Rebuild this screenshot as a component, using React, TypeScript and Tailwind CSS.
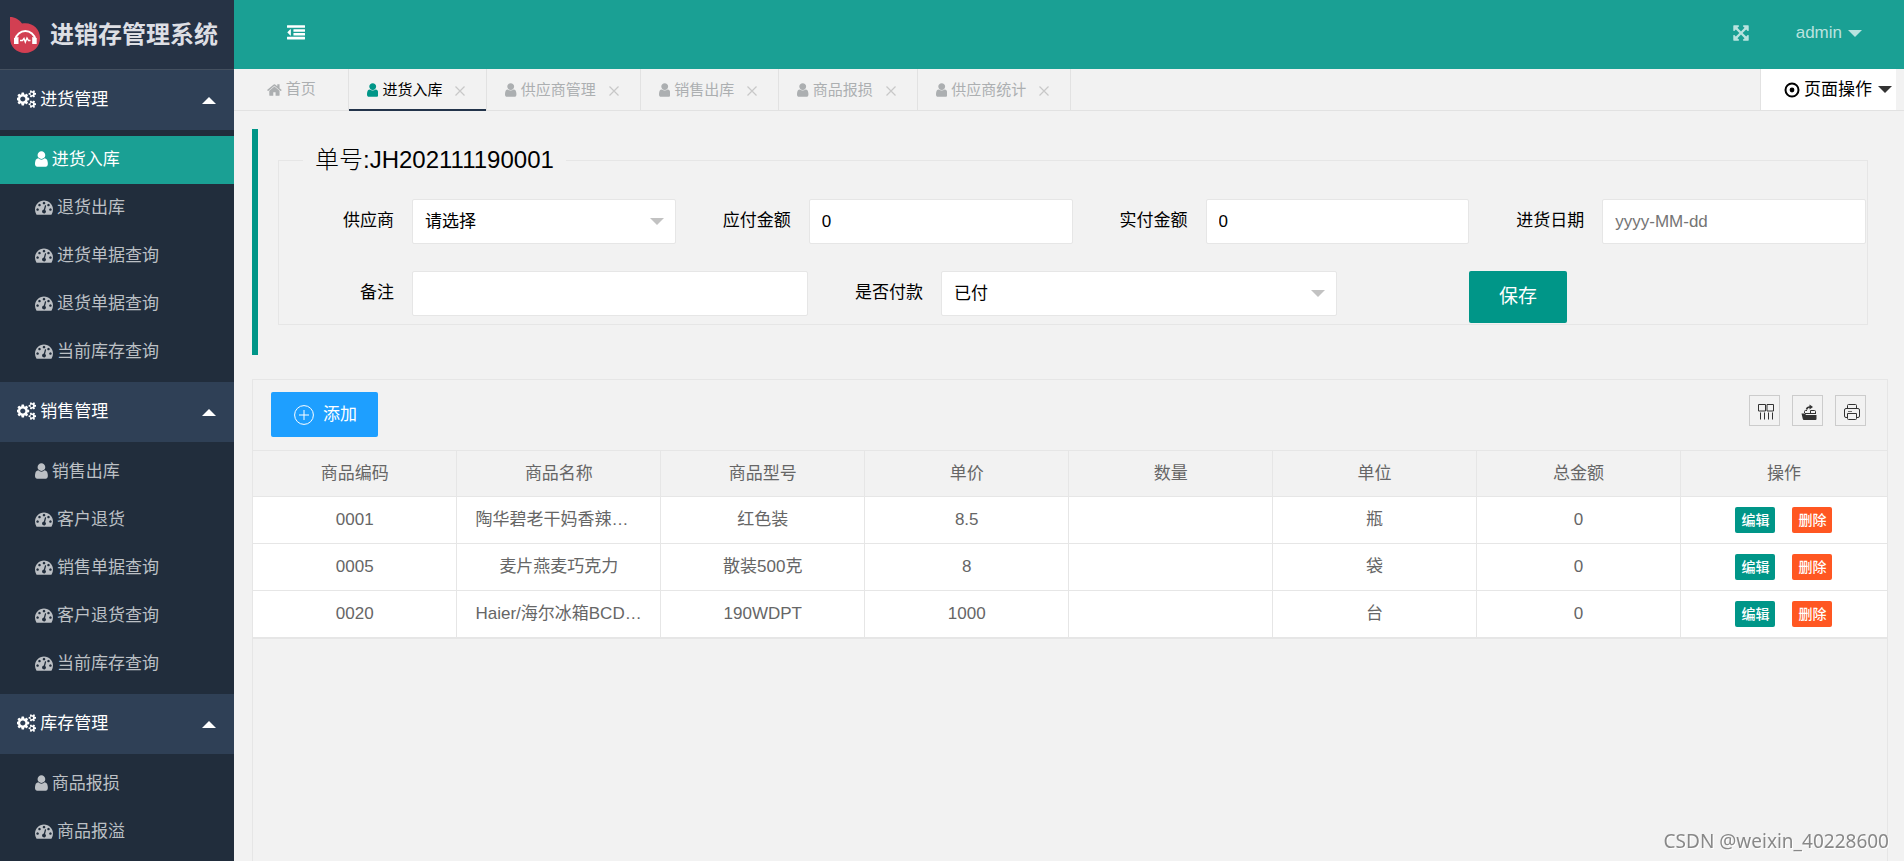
import { useState } from "react";
import type { ReactNode } from "react";

type IconName = "cogs" | "user" | "dashboard" | "home" | "outdent" | "expand";

const cogTooth =
  "v140q0 16-149 31-12 27-30 52 51 113 51 138 0 4-4 7-122 71-124 71-8 0-46-47t-52-68q-20 2-30 2t-30-2q-14 21-52 68t-46 47q-2 0-124-71-4-3-4-7 0-25 51-138-18-25-30-52-149-15-149-31v-140q0-16 149-31 13-29 30-52-51-113-51-138 0-4 4-7 4-2 35-20t59-34 30-16q8 0 46 46.5t52 67.5q20-2 30-2t30 2q51-71 92-112l6-2q4 0 124 70 4 3 4 7 0 25-51 138 17 23 30 52 149 15 149 31z";

const icons: Record<IconName, { box: string; d: string }> = {
  cogs: {
    box: "0 0 1920 1792",
    d:
      "M832 896q0-106-75-181t-181-75-181 75-75 181 75 181 181 75 181-75 75-181zm768 512q0-52-38-90t-90-38-90 38-38 90q0 53 37.500 90.500t90.500 37.500 90.500-37.500 37.500-90.500zm0-1024q0-52-38-90t-90-38-90 38-38 90q0 53 37.500 90.500t90.500 37.500 90.500-37.500 37.500-90.500zm-384 421v185q0 10-7 19.500t-16 10.500l-155 24q-11 35-32 76 34 48 90 115 7 11 7 20 0 12-7 19-23 30-82.500 89.500t-78.500 59.500q-11 0-21-7l-115-90q-37 19-77 31-11 108-23 155-7 24-30 24h-186q-11 0-20-7.500t-10-17.500l-23-153q-34-10-75-31l-118 89q-7 7-20 7-11 0-21-8-144-133-144-160 0-9 7-19 10-14 41-53t47-61q-23-44-35-82l-152-24q-10-1-17-9.500t-7-19.500v-185q0-10 7-19.500t16-10.500l155-24q11-35 32-76-34-48-90-115-7-11-7-20 0-12 7-20 22-30 82-89t79-59q11 0 21 7l115 90q34-18 77-32 11-108 23-154 7-24 30-24h186q11 0 20 7.500t10 17.500l23 153q34 10 75 31l118-89q8-7 20-7 11 0 21 8 144 133 144 160 0 8-7 19-12 16-42 54t-45 60q23 48 34 82l152 23q10 2 17 10.500t7 19.500z" +
      "M1920 1338" + cogTooth + "M1920 314" + cogTooth,
  },
  user: {
    box: "256 0 1280 1792",
    d: "M1536 1399q0 109-62.5 187t-150.5 78h-854q-88 0-150.5-78t-62.5-187q0-85 8.5-160.5t31.5-152 58.5-131 94-89 134.5-34.5q131 128 313 128t313-128q76 0 134.5 34.5t94 89 58.5 131 31.5 152 8.5 160.5zm-256-887q0 159-112.5 271.5t-271.5 112.5-271.5-112.5-112.5-271.5 112.5-271.5 271.5-112.5 271.5 112.5 112.5 271.5z",
  },
  dashboard: {
    box: "0 0 1792 1792",
    d: "M384 1152q0-53-37.5-90.5t-90.5-37.5-90.5 37.5-37.5 90.5 37.5 90.5 90.5 37.5 90.5-37.5 37.5-90.5zm192-448q0-53-37.5-90.5t-90.5-37.5-90.5 37.5-37.5 90.5 37.5 90.5 90.5 37.5 90.5-37.5 37.5-90.5zm428 481l101-382q6-26-7.5-48.5t-38.5-29.5-48 6.5-30 39.5l-101 382q-60 5-107 43.5t-63 98.5q-20 77 20 146t117 89 146-20 89-117q16-60-6-117t-72-91zm660-33q0-53-37.5-90.5t-90.5-37.5-90.5 37.5-37.5 90.5 37.5 90.5 90.5 37.5 90.5-37.5 37.5-90.5zm-640-640q0-53-37.5-90.5t-90.5-37.5-90.5 37.5-37.5 90.5 37.5 90.5 90.5 37.5 90.5-37.5 37.5-90.5zm448 192q0-53-37.5-90.5t-90.5-37.5-90.5 37.5-37.5 90.5 37.5 90.5 90.5 37.5 90.5-37.5 37.5-90.5zm320 448q0 261-141 483-19 29-54 29h-1402q-35 0-54-29-141-221-141-483 0-182 71-348t191-286 286-191 348-71 348 71 286 191 191 286 71 348z",
  },
  home: {
    box: "64 0 1664 1792",
    d: "M1472 992v480q0 26-19 45t-45 19h-384v-384h-256v384h-384q-26 0-45-19t-19-45v-480q0-1 .5-3t.5-3l575-474 575 474q1 2 1 6zm223-69l-62 74q-8 9-21 11h-3q-13 0-21-7l-692-577-692 577q-12 8-24 7-13-2-21-11l-62-74q-8-10-7-23.5t11-21.5l719-599q32-26 76-26t76 26l244 204v-195q0-14 9-23t23-9h192q14 0 23 9t9 23v408l219 182q10 8 11 21.5t-7 23.5z",
  },
  outdent: {
    box: "0 0 1792 1792",
    d: "M384 544v576q0 13-9.5 22.5t-22.5 9.5q-14 0-23-9l-288-288q-9-9-9-23t9-23l288-288q9-9 23-9 13 0 22.5 9.5t9.5 22.5zM32 1280h1728q32 0 32 32v192q0 32-32 32h-1728q-32 0-32-32v-192q0-32 32-32zM672 896h1088q32 0 32 32v192q0 32-32 32h-1088q-32 0-32-32v-192q0-32 32-32zM672 512h1088q32 0 32 32v192q0 32-32 32h-1088q-32 0-32-32v-192q0-32 32-32zM32 128h1728q32 0 32 32v192q0 32-32 32h-1728q-32 0-32-32v-192q0-32 32-32z",
  },
  expand: {
    box: "0 0 1792 1792",
    d: "M1411 541l-355 355 355 355 144-144q29-31 70-14 39 17 39 59v448q0 26-19 45t-45 19h-448q-42 0-59-40-17-39 14-69l144-144-355-355-355 355 144 144q31 30 14 69-17 40-59 40h-448q-26 0-45-19t-19-45v-448q0-42 40-59 39-17 69 14l144 144 355-355-355-355-144 144q-19 19-45 19-12 0-24-5-40-17-40-59v-448q0-26 19-45t45-19h448q42 0 59 40 17 39-14 69l-144 144 355 355 355-355-144-144q-31-30-14-69 17-40 59-40h448q26 0 45 19t19 45v448q0 42-39 59-13 5-25 5-26 0-45-19z",
  },
};

function Icon({ name, className = "h-[18px]" }: { name: IconName; className?: string }) {
  return (
    <svg viewBox={icons[name].box} fill="currentColor" className={`w-auto shrink-0 ${className}`} aria-hidden="true">
      <path d={icons[name].d} />
    </svg>
  );
}

function Caret({ up = false, className = "" }: { up?: boolean; className?: string }) {
  return (
    <svg viewBox="0 0 14 7" fill="currentColor" className={`h-[7px] w-[14px] shrink-0 ${className}`} aria-hidden="true">
      <path d={up ? "M0 7L7 0L14 7Z" : "M0 0L7 7L14 0Z"} />
    </svg>
  );
}

function Logo() {
  return (
    <svg viewBox="0 0 30 36" className="h-9 w-[30px] shrink-0" aria-hidden="true">
      <path d="M0 0C5 0 9 2.500 12 6.500C22 4.500 30 11.500 30 21C30 29.500 23.500 36 15 36C6.500 36 0 29.500 0 21Z" fill="#d23f52" />
      <path d="M5.300 22.500A10.200 10.200 0 0 1 25.400 22.500" fill="none" stroke="#fff" strokeWidth="2" />
      <path d="M4 21L8.500 20V27H4ZM26.700 21L22.200 20V27H26.700Z" fill="#fff" />
      <path d="M10 23.500H12.500L14 21.500L15.300 25L17 21L18.500 23.500H20.500" fill="none" stroke="#fff" strokeWidth="1.400" />
    </svg>
  );
}

const menu = [
  { title: "进货管理", items: ["进货入库", "退货出库", "进货单据查询", "退货单据查询", "当前库存查询"] },
  { title: "销售管理", items: ["销售出库", "客户退货", "销售单据查询", "客户退货查询", "当前库存查询"] },
  { title: "库存管理", items: ["商品报损", "商品报溢"] },
];

function Sidebar() {
  return (
    <aside className="flex w-[234px] shrink-0 flex-col overflow-hidden bg-[#212d3c]">
      <div className="flex h-[70px] shrink-0 items-center gap-[10px] border-b border-[#44505f] bg-[#263345] pl-[10px]">
        <Logo />
        <h1 className="text-2xl font-bold text-[#dddfe4]">进销存管理系统</h1>
      </div>
      <nav className="min-h-0 flex-1 overflow-hidden">
        {menu.map((group, g) => (
          <section key={group.title}>
            <button type="button" className="flex h-[60px] w-full items-center bg-[#2f4056] pr-[18px] pl-[17px] text-white">
              <Icon name="cogs" className="mb-[2px] h-[18px]" />
              <span className="ml-1 flex-1 text-left">{group.title}</span>
              <Caret up />
            </button>
            <ul className="py-[6px]">
              {group.items.map((item, i) => {
                const active = g === 0 && i === 0;
                return (
                  <li key={item}>
                    <a
                      href="#"
                      className={`flex h-12 items-center gap-1 pl-[35px] ${active ? "bg-[#1aa094] text-white" : "text-[#bcc0c5]"}`}
                    >
                      <Icon name={i === 0 ? "user" : "dashboard"} className="mb-[2px] h-[18px]" />
                      <span>{item}</span>
                    </a>
                  </li>
                );
              })}
            </ul>
          </section>
        ))}
      </nav>
    </aside>
  );
}

function Header() {
  return (
    <header className="flex h-[69px] shrink-0 items-center bg-[#1aa094] pr-[42px] pb-[3px] pl-[53px] text-[#bae3df]">
      <button type="button" aria-label="收起菜单" className="text-white">
        <Icon name="outdent" />
      </button>
      <button type="button" aria-label="全屏" className="mr-[46px] ml-auto">
        <Icon name="expand" />
      </button>
      <button type="button" className="flex items-center gap-[6px]">
        admin
        <Caret />
      </button>
    </header>
  );
}

const tabs = ["进货入库", "供应商管理", "销售出库", "商品报损", "供应商统计"];

function TabBar() {
  return (
    <div className="flex h-[42px] shrink-0 border-b border-[#e2e2e2] text-[15px] text-[#acafb1]">
      <a href="#" className="flex w-[115px] items-center gap-1 border-r border-[#e2e2e2] pl-[33px]">
        <Icon name="home" className="h-4" />
        首页
      </a>
      {tabs.map((tab, i) => (
        <div
          key={tab}
          className={`-mb-px flex items-center border-r border-[#e2e2e2] pr-[21px] pl-[18px] ${
            i === 0 ? "shadow-[inset_0_-2px_0_#23344b]" : ""
          }`}
        >
          <Icon name="user" className={`h-4 ${i === 0 ? "text-[#009688]" : ""}`} />
          <a href="#" className={`ml-1 ${i === 0 ? "text-black" : ""}`}>
            {tab}
          </a>
          <button type="button" aria-label={`关闭${tab}`} className="ml-[13px] text-[#c8c8c8]">
            <svg viewBox="0 0 10 10" className="mt-[2px] size-[10px]" aria-hidden="true">
              <path d="M.5.5L9.500 9.500M9.500.5L.5 9.500" stroke="currentColor" strokeWidth="1.200" />
            </svg>
          </button>
        </div>
      ))}
      <button
        type="button"
        className="mr-2 ml-auto flex items-center border-l border-[#e2e2e2] bg-white pr-[4px] pl-[23px] text-[17px] text-black"
      >
        <svg viewBox="0 0 16 16" className="size-4" aria-hidden="true">
          <circle cx="8" cy="8" r="6.500" fill="none" stroke="currentColor" strokeWidth="2" />
          <circle cx="8" cy="8" r="2.400" fill="currentColor" />
        </svg>
        <span className="mr-[6px] ml-1">页面操作</span>
        <Caret className="text-[#333]" />
      </button>
    </div>
  );
}

const control =
  "h-[45px] w-full min-w-0 appearance-none rounded-[2px] border border-[#e6e6e6] bg-white px-3 text-black outline-none placeholder:text-[#757575]";

function Field({ id, label, children }: { id: string; label: string; children: ReactNode }) {
  return (
    <div className="flex items-start">
      <label htmlFor={id} className="w-[133px] shrink-0 pr-[18px] text-right leading-[44px]">
        {label}
      </label>
      <div className="grid min-w-0 flex-1">{children}</div>
    </div>
  );
}

function Select({ id, options }: { id: string; options: string[] }) {
  return (
    <>
      <select id={id} className={`col-start-1 row-start-1 ${control}`}>
        {options.map((option) => (
          <option key={option}>{option}</option>
        ))}
      </select>
      <Caret className="pointer-events-none col-start-1 row-start-1 mr-3 self-center justify-self-end text-[#c2c2c2]" />
    </>
  );
}

function OrderForm() {
  const [due, setDue] = useState("0");
  const [paid, setPaid] = useState("0");
  return (
    <form className="border-l-[6px] border-[#009688] px-5 pt-[18px] pb-[30px] text-black">
      <fieldset className="border border-[#e6e6e6] pr-px pb-px">
        <legend className="ml-6 px-3 text-2xl leading-[26px] font-light">单号:JH202111190001</legend>
        <div className="grid grid-cols-4 pt-[26px]">
          <Field id="supplier" label="供应商">
            <Select id="supplier" options={["请选择"]} />
          </Field>
          <Field id="due" label="应付金额">
            <input id="due" className={control} value={due} onChange={(e) => setDue(e.target.value)} />
          </Field>
          <Field id="paid" label="实付金额">
            <input id="paid" className={control} value={paid} onChange={(e) => setPaid(e.target.value)} />
          </Field>
          <Field id="date" label="进货日期">
            <input id="date" className={control} placeholder="yyyy-MM-dd" />
          </Field>
        </div>
        <div className="mt-[27px] grid grid-cols-3">
          <Field id="remark" label="备注">
            <input id="remark" className={control} />
          </Field>
          <Field id="settled" label="是否付款">
            <Select id="settled" options={["已付", "未付"]} />
          </Field>
          <div className="pl-[132px]">
            <button type="button" className="block h-[52px] rounded-[2px] bg-[#009688] px-[30px] text-[19px] text-white">
              保存
            </button>
          </div>
        </div>
      </fieldset>
    </form>
  );
}

const columns = ["商品编码", "商品名称", "商品型号", "单价", "数量", "单位", "总金额", "操作"];

const rows = [
  ["0001", "陶华碧老干妈香辣脆油辣椒", "红色装", "8.5", "", "瓶", "0"],
  ["0005", "麦片燕麦巧克力", "散装500克", "8", "", "袋", "0"],
  ["0020", "Haier/海尔冰箱BCD-190WDPT", "190WDPT", "1000", "", "台", "0"],
];

function ToolButton({ label, children }: { label: string; children: ReactNode }) {
  return (
    <button type="button" aria-label={label} className="flex size-[31px] items-center justify-center border border-[#ccc] pl-[3px] text-[#333]">
      <svg viewBox="0 0 16 16" className="mt-[2px] size-4" fill="none" stroke="currentColor" aria-hidden="true">
        {children}
      </svg>
    </button>
  );
}

function GoodsTable() {
  return (
    <section className="mt-6 flex-1 border border-b-0 border-[#e6e6e6]">
      <div className="flex items-start justify-between pt-3 pr-[21px] pb-[13px] pl-[18px]">
        <button type="button" className="flex h-[45px] items-center gap-[9px] rounded-[2px] bg-[#1e9fff] pr-[21px] pl-[23px] text-white">
          <svg viewBox="0 0 20 20" className="size-5" fill="none" stroke="currentColor" aria-hidden="true">
            <circle cx="10" cy="10" r="9.400" />
            <path d="M10 5V15M5 10H15" />
          </svg>
          添加
        </button>
        <div className="mt-[3px] flex gap-3">
          <ToolButton label="筛选列">
            <path d="M.5.5H7.500V7H.5ZM9 .5H15.500V7H9Z" />
            <path d="M2.500 8.500V15.500M6.500 8.500V15.500M10.500 8.500V15.500M14.500 8.500V15.500" />
          </ToolButton>
          <ToolButton label="导出">
            <path d="M.5 9.500H4L5 11H15.500V15Q15.500 16 14.500 16H3Q2 16 1.800 15Z" fill="currentColor" stroke="none" />
            <path d="M3.500 9V7.500Q3.500 6.500 4.500 6.500H6M9.500 9.500V6.500H13.500Q14.500 6.500 14.500 7.500V10M4 9.500H14" />
            <path d="M5.500 5.500Q6 3 9 3" strokeWidth="1.600" />
            <path d="M8.500.5L12 3L8.500 5.500Z" fill="currentColor" stroke="none" />
          </ToolButton>
          <ToolButton label="打印">
            <path d="M3.500 4V1.500Q3.500.5 4.500.5H11.500Q12.500.5 12.500 1.500V4M3.500 13.500H2Q.5 13.500.5 12V6Q.5 4.500 2 4.500H14Q15.500 4.500 15.500 6V12Q15.500 13.500 14 13.500H12.500" />
            <path d="M3.500 9.500H12.500V14.500Q12.500 15.500 11.500 15.500H4.500Q3.500 15.500 3.500 14.500Z" />
            <path d="M4 7.500H8" strokeWidth=".7" />
          </ToolButton>
        </div>
      </div>
      <table className="w-full table-fixed border-b border-[#e6e6e6] text-center text-[#666]">
        <thead>
          <tr className="h-[46px] border-y border-[#e6e6e6]">
            {columns.map((column) => (
              <th key={column} className="w-[12.48%] border-r border-[#e6e6e6] px-[18px] font-normal last:w-auto last:border-r-0">
                {column}
              </th>
            ))}
          </tr>
        </thead>
        <tbody>
          {rows.map((row) => (
            <tr key={row[0]} className="h-[47px] border-b border-[#e6e6e6] bg-white last:border-b-2">
              {row.map((cell, c) => (
                <td key={columns[c]} className="truncate border-r border-[#e6e6e6] px-[18px]">
                  {cell}
                </td>
              ))}
              <td>
                <div className="flex justify-center gap-[17px] text-sm font-medium text-white">
                  <button type="button" className="h-[26px] rounded-[2px] bg-[#009688] px-[6px]">编辑</button>
                  <button type="button" className="h-[26px] rounded-[2px] bg-[#ff5722] px-[6px]">删除</button>
                </div>
              </td>
            </tr>
          ))}
        </tbody>
      </table>
    </section>
  );
}

export default function App() {
  return (
    <div className="flex h-screen overflow-hidden bg-[#f2f2f2] font-['Liberation_Sans','Noto_Sans_CJK_SC',sans-serif] text-[17px]">
      <Sidebar />
      <div className="flex min-w-0 flex-1 flex-col">
        <Header />
        <TabBar />
        <main className="flex min-h-0 flex-1 flex-col overflow-hidden pt-[18px] pr-4 pl-[18px]">
          <OrderForm />
          <GoodsTable />
        </main>
      </div>
      <p className="pointer-events-none fixed right-[15px] bottom-[6px] font-['Noto_Sans','Open_Sans',sans-serif] text-[19px] leading-7 text-[#888] [text-shadow:1px_1px_0_#fff]">
        CSDN @weixin_40228600
      </p>
    </div>
  );
}
